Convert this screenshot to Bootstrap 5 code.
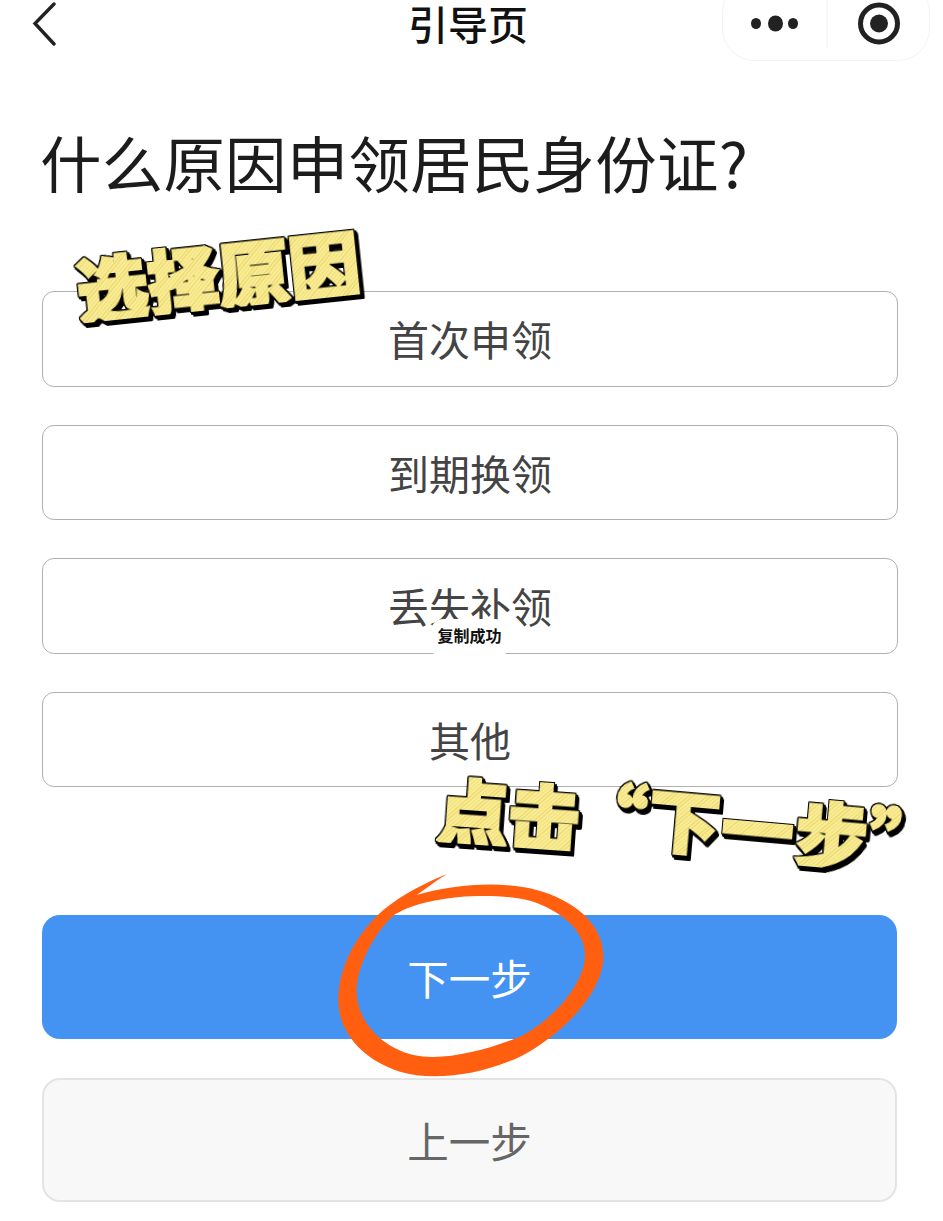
<!DOCTYPE html>
<html lang="zh">
<head>
<meta charset="utf-8">
<title>引导页</title>
<link href="https://cdn.jsdelivr.net/npm/bootstrap@5.3.0/dist/css/bootstrap.min.css" rel="stylesheet">
<style>
html,body{background:#fff;margin:0;height:1221px;overflow:hidden}
body{font-family:"Noto Sans CJK SC","Liberation Sans",sans-serif}
.guide-page{position:relative;height:1221px;padding:0 46px 0 42px;overflow:hidden}
.top-nav{display:grid;grid-template-columns:1fr auto 1fr;height:61px;align-items:start}
.nav-back{width:24px;height:44px;margin-left:-10px;margin-top:2px;display:block}
.nav-title{font-size:40px;line-height:46px;font-weight:500;color:#111;margin-left:-3px}
.capsule{justify-self:end;width:208px;height:81px;margin:-20px -33px 0 0;border:1px solid #f3f3f3;border-radius:32px;position:relative}
.capsule-svg{display:block;width:208px;height:81px}
.ask-title{font-size:61.5px;line-height:80px;font-weight:400;color:#1c1c1c;margin:61px 0 89px -2px;letter-spacing:.2px;white-space:nowrap}
.opt-stack{gap:38.1px;margin-right:-1px}
.opt-btn{height:95.5px;border:1px solid #b0b0b0;border-radius:12px;background:#fff;color:#444;font-size:41px;line-height:87px;padding:0;text-align:center}
.step-stack{margin-top:128px;gap:39px}
.step-btn{height:124px;border-radius:18px;font-size:41.5px;line-height:113px;padding:0;text-align:center}
.step-next{background:#4493f3;color:#fff;border:0}
.step-prev{background:#f8f8f8;color:#666;border:2px solid #e4e4e4}
.toast-box{position:absolute;left:430px;top:619px;width:79px;height:36px;background:#fff;border-radius:14px 14px 8px 8px;font-size:16px;font-weight:700;line-height:33px;text-align:center;color:#111;white-space:nowrap}
.sticker{position:absolute;font-weight:900;white-space:nowrap;line-height:1;color:transparent;-webkit-text-fill-color:transparent;
 -webkit-text-stroke:3px transparent;
 background:repeating-linear-gradient(135deg,#faec94 0,#faec94 2px,#ecdb76 2px,#ecdb76 3px);-webkit-background-clip:text;background-clip:text;
 filter:drop-shadow(1px 0 0 #000) drop-shadow(-1px 0 0 #000) drop-shadow(0 1px 0 #000) drop-shadow(0 -1px 0 #000) drop-shadow(2px 2px 0 #000) drop-shadow(1px 2px 0 #000)}
.stk-a{left:76px;top:238px;font-size:71px;transform:rotate(-6deg)}
.stk-b{left:438px;top:776px;font-size:71px;transform:rotate(4deg)}
.stk-c{left:610px;top:790px;font-size:72px;letter-spacing:2px;font-feature-settings:"palt";transform:rotate(5deg)}
.ring{position:absolute;left:320px;top:860px;width:300px;height:230px}
</style>
</head>
<body>
<div class="guide-page">
  <div class="top-nav">
    <svg class="nav-back" viewBox="0 0 24 44" fill="none" stroke="#222" stroke-width="3.4" stroke-linecap="round" stroke-linejoin="miter"><path d="M22 2 3 21.5 22 42"/></svg>
    <div class="nav-title">引导页</div>
    <div class="capsule">
      <svg class="capsule-svg" viewBox="0 0 208 81">
        <ellipse cx="33" cy="42.5" rx="5" ry="5.5" fill="#222"/>
        <ellipse cx="52.5" cy="42.5" rx="7.5" ry="8" fill="#222"/>
        <ellipse cx="70" cy="42.5" rx="5" ry="5.5" fill="#222"/>
        <path d="M104 0V67" stroke="#eee" stroke-width="1"/>
        <circle cx="156" cy="42.5" r="18.5" fill="none" stroke="#222" stroke-width="5"/>
        <circle cx="156" cy="42.5" r="9" fill="#222"/>
      </svg>
    </div>
  </div>

  <h1 class="ask-title">什么原因申领居民身份证?</h1>

  <div class="d-flex flex-column opt-stack">
    <button type="button" class="btn opt-btn">首次申领</button>
    <button type="button" class="btn opt-btn">到期换领</button>
    <button type="button" class="btn opt-btn">丢失补领</button>
    <button type="button" class="btn opt-btn">其他</button>
  </div>

  <div class="d-flex flex-column step-stack">
    <button type="button" class="btn step-btn step-next">下一步</button>
    <button type="button" class="btn step-btn step-prev">上一步</button>
  </div>

  <div class="toast-box">复制成功</div>
  <div class="sticker stk-a">选择原因</div>
  <div class="sticker stk-b">点击</div>
  <div class="sticker stk-c">“下一步”</div>

  <svg class="ring" viewBox="0 0 900 690">
    <path fill="#ff5f0f" fill-rule="evenodd" d="M382 42C330 62 250 100 190 150C110 220 55 320 55 420C55 520 130 600 240 635C340 665 480 645 600 590C720 530 850 400 850 290C850 190 760 120 650 90C540 60 390 75 290 105C320 85 350 60 382 42ZM225 163C160 220 110 320 110 395C110 480 180 560 280 585C370 605 500 570 600 530C700 480 795 370 795 285C795 210 720 150 630 122C520 95 320 105 225 163Z"/>
  </svg>
</div>
<script src="https://cdn.jsdelivr.net/npm/bootstrap@5.3.0/dist/js/bootstrap.bundle.min.js"></script>
</body>
</html>
